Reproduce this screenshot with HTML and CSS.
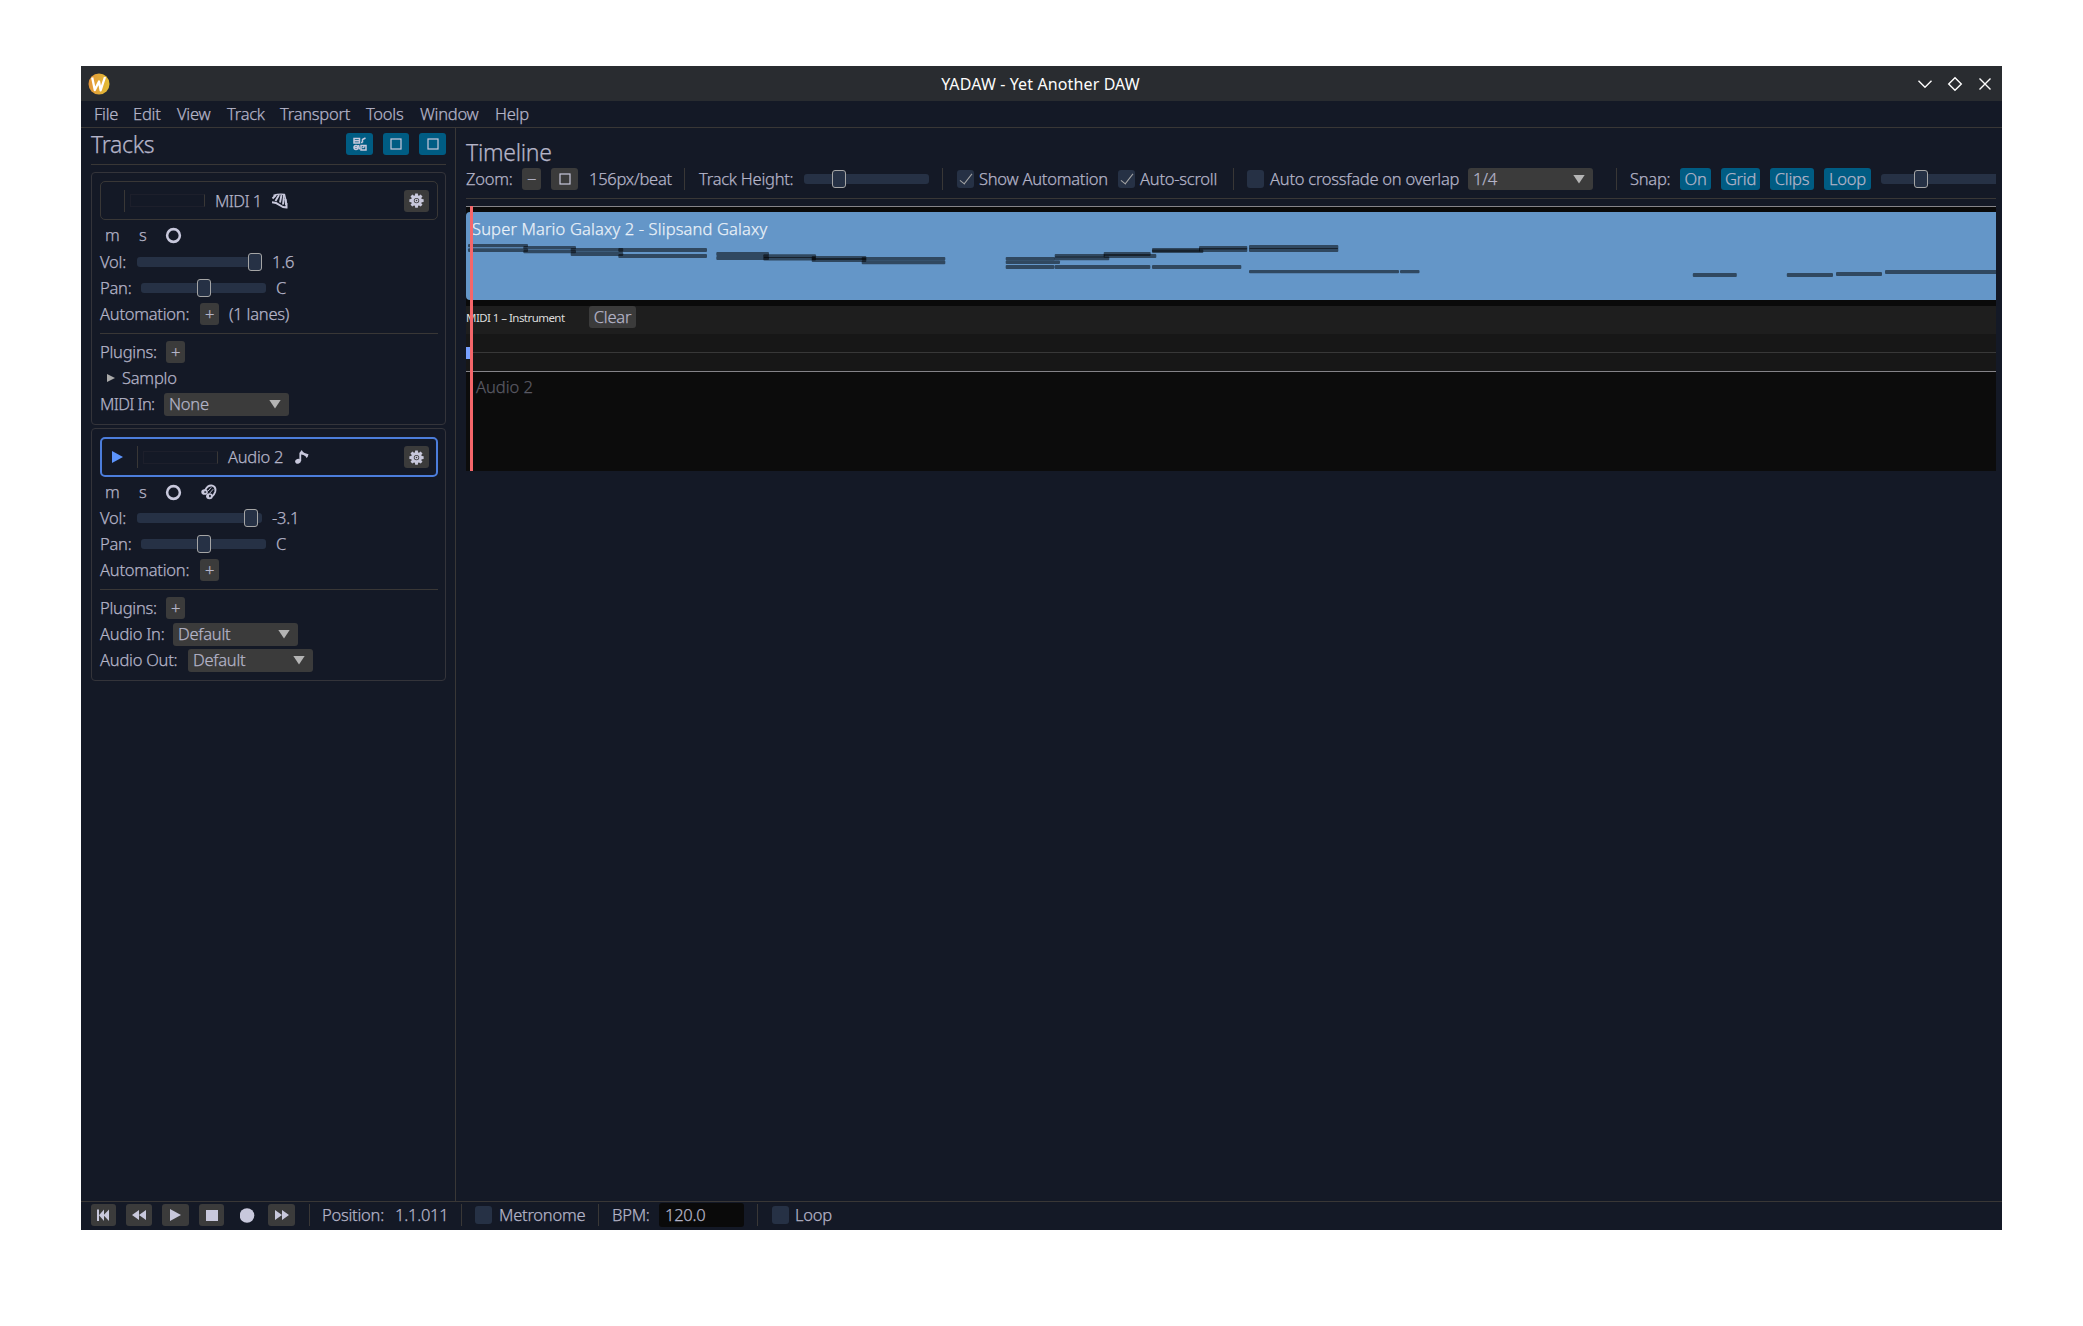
FILE: index.html
```html
<!DOCTYPE html>
<html lang="en">
<head>
<meta charset="utf-8">
<title>YADAW - Yet Another DAW</title>
<link rel="stylesheet" href="styles.css">
</head>
<body>
<svg class="defs" width="0" height="0">
  <symbol id="gear" viewBox="0 0 16 16">
    <path fill-rule="evenodd" d="M6.600 .5h2.800l.3 2.100 1 .4 1.700-1.300 2 2-1.300 1.700.4 1 2.100.3v2.800l-2.100.3-.4 1 1.300 1.700-2 2-1.700-1.300-1 .4-.3 2.100H6.600l-.3-2.100-1-.4-1.700 1.300-2-2 1.300-1.700-.4-1-2.100-.3V6.700l2.100-.3.4-1L1.600 3.700l2-2L5.300 3l1-.4zM8 5.200a2.900 2.900 0 1 0 0 5.800A2.900 2.900 0 0 0 8 5.200zm0 .8a2.100 2.100 0 1 1 0 4.200A2.100 2.100 0 0 1 8 6zm0 1.300a.8.8 0 1 0 0 1.600.8.800 0 0 0 0-1.600z"/>
  </symbol>
  <symbol id="ring" viewBox="0 0 16 16"><circle cx="8" cy="8" r="6" fill="none" stroke="currentColor" stroke-width="2.400"/></symbol>
  <symbol id="square" viewBox="0 0 12 12"><rect x="1" y="1" width="10" height="10" fill="none" stroke="currentColor" stroke-width="1.200"/></symbol>
</svg>
<div class="window">
  <header class="titlebar">
    <svg class="logo" viewBox="0 0 22 22"><defs><linearGradient id="gold" x1="0" x2="1"><stop offset="0" stop-color="#e3963a"/><stop offset="1" stop-color="#e2bd34"/></linearGradient></defs><circle cx="11" cy="11" r="10.500" fill="url(#gold)"/><path d="M4.200 4.500 6.800 17 11 8.500 12.600 17.300 17 4" fill="none" stroke="#fff" stroke-width="2.300" stroke-linejoin="round"/></svg>
    <h1 class="app-title">YADAW - Yet Another DAW</h1>
    <svg class="controls" viewBox="0 0 76 16"><path d="M1.500 4.800 8 11.300 14.500 4.800M31.700 8 38 1.700 44.300 8 38 14.300zM62.500 2.500l11 11M73.500 2.500l-11 11" fill="none" stroke="#fcfcfc" stroke-width="1.400"/></svg>
  </header>
  <nav class="menubar">
    <span>File</span><span>Edit</span><span>View</span><span>Track</span><span>Transport</span><span>Tools</span><span>Window</span><span>Help</span>
  </nav>
  <div class="workspace">
    <aside class="tracks">
      <div class="tracks-head">
        <h2 class="heading">Tracks</h2>
        <span class="toggle b27"><svg width="14" height="14" viewBox="0 0 14 14" fill="none" stroke="currentColor" stroke-width="1.500"><path d="M1 1.500h5.500v4.500H1zM1 3.700h5.500M9.500 5.500V2.500l3-1.500M8 5.500h1.500M5.500 8 6.500 12.500M8 8.500h5v4.500H8zM9.500 11l2-1.500"/><circle cx="3" cy="10.500" r="2"/><path d="M1 10.500h4"/></svg></span>
        <span class="toggle b26"><svg width="12" height="12"><use href="#square"/></svg></span>
        <span class="toggle b27"><svg width="12" height="12"><use href="#square"/></svg></span>
      </div>
      <section class="card midi">
        <div class="card-head">
          <span class="arrow"></span><i class="vsep"></i><i class="meter"></i>
          <span class="name">MIDI 1</span>
          <svg class="kind" width="17" height="16" viewBox="0 0 17 16" fill="none" stroke="currentColor"><path d="M1 9.300Q5.500 9.500 8.500 12 11.500 14.500 15.500 14.500V10" stroke-width="2"/><path d="M2.500 2.500Q8 .5 13.500 1.500L15.500 10" stroke-width="1.400"/><path d="M5 2 1.500 5.500M8 2 4.500 8M10.500 2 9 9.500M13 2 12 11.500M14.500 6l.5 6" stroke-width="1.900"/></svg>
          <span class="btn b25 gear"><svg width="15" height="15" fill="currentColor"><use href="#gear"/></svg></span>
        </div>
        <div class="row toggles"><span>m</span><span>s</span><svg width="17" height="17"><use href="#ring"/></svg></div>
        <div class="row vol"><span>Vol:</span><span class="slider"><i class="knob p111"></i></span><span>1.6</span></div>
        <div class="row pan"><span>Pan:</span><span class="slider"><i class="knob p56"></i></span><span>C</span></div>
        <div class="row automation"><span>Automation:</span><span class="btn b19">+</span><span>(1 lanes)</span></div>
        <hr>
        <div class="row plugins"><span>Plugins:</span><span class="btn b19">+</span></div>
        <div class="row plugin"><i class="tri"></i><span>Samplo</span></div>
        <div class="row midi-in"><span>MIDI In:</span><span class="combo">None</span></div>
      </section>
      <section class="card audio">
        <div class="card-head selected">
          <span class="arrow"><svg width="11" height="12"><path d="M0 0 11 6 0 12z" fill="#5c93fb"/></svg></span><i class="vsep"></i><i class="meter"></i>
          <span class="name">Audio 2</span>
          <svg class="kind" width="14" height="14" viewBox="0 0 14 14" fill="currentColor"><ellipse cx="3" cy="11.200" rx="2.900" ry="2.400" transform="rotate(-20 3 11.200)"/><path d="M4.400 11V3L6.800 0Q8 3.200 13.500 4.200 13 7.500 11.300 8 11.300 5.500 6.200 4.500V11z"/></svg>
          <span class="btn b25 gear"><svg width="15" height="15" fill="currentColor"><use href="#gear"/></svg></span>
        </div>
        <div class="row toggles"><span>m</span><span>s</span><svg width="17" height="17"><use href="#ring"/></svg><svg width="16" height="16" viewBox="0 0 17 16" fill="currentColor"><g fill="none" stroke="currentColor"><path d="M4.500 6Q7 .5 12 1.200 16.500 2.500 15 8 14 11 12 12.500" stroke-width="2"/><path d="M7.500 7 11 3M9 9.500 13 5" stroke-width="1"/></g><ellipse cx="3.800" cy="8" rx="3.500" ry="3"/><ellipse cx="9" cy="12.500" rx="3.600" ry="3.200"/><ellipse cx="4.500" cy="8" rx="1.200" ry=".9" fill="#141926"/><ellipse cx="9.500" cy="12.300" rx="1" ry="1.500" fill="#141926"/></svg></div>
        <div class="row vol"><span>Vol:</span><span class="slider"><i class="knob p107"></i></span><span>-3.1</span></div>
        <div class="row pan"><span>Pan:</span><span class="slider"><i class="knob p56"></i></span><span>C</span></div>
        <div class="row automation"><span>Automation:</span><span class="btn b19">+</span></div>
        <hr>
        <div class="row plugins"><span>Plugins:</span><span class="btn b19">+</span></div>
        <div class="row audio-in"><span>Audio In:</span><span class="combo">Default</span></div>
        <div class="row audio-out"><span>Audio Out:</span><span class="combo">Default</span></div>
      </section>
    </aside>
    <main class="timeline">
      <h2 class="heading">Timeline</h2>
      <div class="toolbar">
        <span>Zoom:</span><span class="btn b19">−</span><span class="btn b27"><svg width="12" height="12"><use href="#square"/></svg></span><span>156px/beat</span><i class="vsep"></i>
        <span>Track Height:</span><span class="slider"><i class="knob p28"></i></span><i class="vsep"></i>
        <span class="check on"></span><span>Show Automation</span><span class="check on"></span><span>Auto-scroll</span><i class="vsep"></i>
        <span class="check"></span><span>Auto crossfade on overlap</span><span class="combo">1/4</span><i class="vsep"></i>
        <span>Snap:</span><span class="toggle b31">On</span><span class="toggle b39">Grid</span><span class="toggle b44">Clips</span><span class="toggle b47">Loop</span><span class="slider cut"><i class="knob p33"></i></span>
      </div>
      <div class="canvas">
        <div class="lane">
          <div class="clip">
            <span class="clip-name">Super Mario Galaxy 2 - Slipsand Galaxy</span>
            <svg class="notes" viewBox="466 212 1530 88" fill="#000" fill-opacity=".52">
              <rect x="468" y="244" width="60" height="3.300" rx="1"/><rect x="468" y="248.300" width="60" height="3.700" rx="1"/>
              <rect x="523.300" y="246" width="52.700" height="3.400" rx="1"/><rect x="523.300" y="250" width="52.700" height="3.300" rx="1"/>
              <rect x="570.700" y="248" width="52.500" height="3.700" rx="1"/><rect x="570.700" y="252" width="52.500" height="4" rx="1"/>
              <rect x="618.300" y="248" width="88.700" height="4" rx="1"/><rect x="618.300" y="254" width="88.700" height="4" rx="1"/>
              <rect x="716.300" y="252" width="52.700" height="4" rx="1"/><rect x="716.300" y="256" width="52.700" height="4" rx="1"/>
              <rect x="763.300" y="254.300" width="52.700" height="3.700" rx="1"/><rect x="763.300" y="257" width="52.700" height="3.500" rx="1"/>
              <rect x="811.700" y="256" width="54.600" height="4" rx="1"/><rect x="811.700" y="258" width="54.600" height="4" rx="1"/>
              <rect x="861.700" y="257" width="83.600" height="3.500" rx="1"/><rect x="861.700" y="260.500" width="83.600" height="3.700" rx="1"/>
              <rect x="1005.700" y="257" width="49.300" height="3.500" rx="1"/><rect x="1005.700" y="260.400" width="54.300" height="3.700" rx="1"/>
              <rect x="1054.700" y="254" width="50" height="3.500" rx="1"/><rect x="1054.700" y="256.500" width="54.600" height="3.700" rx="1"/>
              <rect x="1103.700" y="252" width="47" height="4" rx="1"/><rect x="1103.700" y="254" width="52.600" height="4" rx="1"/>
              <rect x="1152" y="248" width="48" height="4" rx="1"/><rect x="1152" y="249.500" width="51.300" height="3.500" rx="1"/>
              <rect x="1199" y="246" width="48.300" height="3.500" rx="1"/><rect x="1199" y="248" width="48.300" height="4" rx="1"/>
              <rect x="1249" y="245" width="89.300" height="4" rx="1"/><rect x="1249" y="248" width="89.300" height="4" rx="1"/>
              <rect x="1005.700" y="265" width="48.700" height="4" rx="1"/><rect x="1054.700" y="265" width="95.600" height="4" rx="1"/><rect x="1152" y="265" width="89.300" height="4" rx="1"/>
              <rect x="1249" y="270" width="150" height="3.300" rx="1"/><rect x="1400" y="270" width="19.500" height="3.300" rx="1"/>
              <rect x="1692.800" y="273" width="44" height="4" rx="1"/><rect x="1786.800" y="273" width="46.200" height="4" rx="1"/><rect x="1836" y="272" width="46" height="4" rx="1"/><rect x="1885" y="270" width="114" height="4" rx="1"/>
            </svg>
          </div>
        </div>
        <div class="auto-head"><span class="auto-name">MIDI 1 – Instrument</span><span class="btn b47">Clear</span></div>
        <div class="auto-lane"><i class="point"></i><i class="auto-line"></i></div>
        <div class="audio-lane"><span>Audio 2</span></div>
        <i class="playhead"></i>
      </div>
    </main>
  </div>
  <footer class="transport">
    <span class="btn b25"><svg width="13" height="12" fill="currentColor"><path d="M0 .5h2V12H0zM7 .5V12L2 6.200zM12 .5V12L6.500 6.200z"/></svg></span>
    <span class="btn b26"><svg width="14" height="10" fill="currentColor"><path d="M7 0v10L0 5zM14 0v10L7 5z"/></svg></span>
    <span class="btn b27"><svg width="11" height="12" fill="currentColor"><path d="M0 0 11 6 0 12z"/></svg></span>
    <span class="btn b25"><svg width="12" height="11" fill="currentColor"><path d="M0 0h12v11H0z"/></svg></span>
    <svg width="15" height="15" fill="currentColor"><circle cx="7" cy="7.500" r="7.300"/></svg>
    <span class="btn b27"><svg width="14" height="10" fill="currentColor"><path d="M0 0 7 5 0 10zM7 0l7 5-7 5z"/></svg></span>
    <i class="vsep"></i><span>Position:</span><span>1.1.011</span><i class="vsep"></i>
    <span class="check"></span><span>Metronome</span><i class="vsep"></i><span>BPM:</span><span class="field">120.0</span><i class="vsep"></i><span class="check"></span><span>Loop</span>
  </footer>
</div>
</body>
</html>
```
FILE: styles.css
```css
* { box-sizing: border-box; }
body {
  margin: 0;
  padding: 66px 81px;
  background: #fff;
  color: #b4b4c8;
  font: 300 16.500px/22px "Noto Sans", sans-serif;
  letter-spacing: -0.24px;
  -webkit-text-stroke: 0.25px currentColor;
  white-space: nowrap;
}
.defs { position: absolute; }
svg { display: block; flex: none; color: #c8c8dc; }
i { display: block; flex: none; }
.window {
  width: 1921px;
  height: 1164px;
  background: #141926;
  display: grid;
  grid-template-rows: 35px 27px 1073px 29px;
}
.titlebar {
  background: #292c30;
  display: grid;
  grid-template-columns: 100px 1fr 100px;
  align-items: center;
  padding: 0 9px 0 7px;
}
.logo { width: 22px; height: 22px; }
.app-title { margin: 0; font-size: 16px; font-weight: 400; color: #fcfcfc; text-align: center; letter-spacing: 0.12px; -webkit-text-stroke: 0; }
.controls { width: 76px; height: 16px; justify-self: end; }
.menubar {
  display: grid;
  grid-template-columns: 39px 44px 50px 53px 86px 54px 75px 40px;
  align-items: center;
  padding-left: 13px;
  border-bottom: 1px solid #393736;
}
.workspace { display: grid; grid-template-columns: 375px 1fr; }
.tracks { border-right: 1px solid #393736; padding: 0 9px 0 10px; }
.heading { margin: 0; font-size: 23px; font-weight: 300; line-height: 30px; letter-spacing: -0.3px; }
.tracks-head {
  height: 37px;
  display: flex;
  align-items: center;
  gap: 10px;
  padding-bottom: 4px;
  border-bottom: 1px solid #393736;
}
.tracks-head .heading { flex: 1; }

.btn, .toggle {
  height: 22px;
  border-radius: 3px;
  background: #3b3b3b;
  display: flex;
  align-items: center;
  justify-content: center;
}
.toggle { background: #005c83; }
.b19 { width: 19px; }
.b25 { width: 25px; }
.b26 { width: 26px; }
.b27 { width: 27px; }
.b31 { width: 31px; }
.b39 { width: 39px; }
.b44 { width: 44px; }
.b47 { width: 47px; }
.vsep { width: 1px; height: 22px; background: #393736; }

.card { height: 253px; border: 1px solid #34343a; border-radius: 4px; padding: 8px; margin-top: 7px; }
.card + .card { margin-top: 3px; }
.card-head {
  height: 39px;
  width: 338px;
  border: 1px solid #393736;
  border-radius: 5px;
  display: flex;
  align-items: center;
  padding: 0 8px 0 10px;
  margin-bottom: 2px;
}
.card-head.selected { height: 40px; border: 2px solid #4c7ddb; padding: 0 7px 0 10px; }
.arrow { width: 13px; }
.selected .arrow { width: 25px; }
.meter { width: 75px; height: 13px; border: 1px solid #1d1f2b; border-right-color: #393736; margin-left: 5px; }
.name { margin-left: 10px; width: 56px; letter-spacing: -0.6px; }
.selected .name { width: 67px; letter-spacing: -0.27px; }
.gear { margin-left: auto; }
.row { height: 26px; display: grid; align-items: center; }
.toggles { grid-template-columns: 34px 26px 36px 20px; padding-left: 5px; }
.midi .vol { margin-top: 1px; }
.vol { grid-template-columns: 37px 135px 40px; }
.pan { grid-template-columns: 41px 135px 40px; }
.automation { grid-template-columns: 100px 29px 70px; }
.plugins { grid-template-columns: 66px 30px; }
.plugin { grid-template-columns: 15px 60px; padding-left: 7px; }
.midi-in { grid-template-columns: 64px 125px; }
.midi-in span:first-child { letter-spacing: -0.65px; }
.audio-in { grid-template-columns: 73px 125px; }
.audio-out { grid-template-columns: 88px 125px; }
hr { width: 338px; height: 1px; border: 0; background: #393736; margin: 6px 0 5px; }
.tri { width: 8px; height: 8px; background: #aaa; clip-path: polygon(0 0, 100% 50%, 0 100%); }
.slider { position: relative; width: 125px; height: 10px; border-radius: 3px; background: #263145; }
.slider.cut { width: 115px; border-radius: 3px 0 0 3px; }
.knob {
  position: absolute;
  top: -4px;
  width: 14px;
  height: 18px;
  border: 1.300px solid #a5a5a5;
  border-radius: 3px;
  background: #263145;
}
.p28 { left: 28px; }
.p33 { left: 33px; }
.p56 { left: 56px; }
.p107 { left: 107px; }
.p111 { left: 111px; }
.combo {
  width: 125px;
  height: 23px;
  border-radius: 3px;
  background: #3b3b3b;
  display: flex;
  align-items: center;
  justify-content: space-between;
  padding: 0 8px 0 5px;
}
.combo::after { content: ""; width: 12px; height: 9px; background: #b4b4b4; clip-path: polygon(0 0, 100% 0, 50% 100%); }

.timeline { padding: 9px 6px 0 10px; overflow: hidden; }
.timeline .heading { height: 31px; }
.toolbar {
  height: 22px;
  display: grid;
  align-items: center;
  grid-template-columns: 56px 29px 38px 95px 15px 105px 138px 15px 22px 139px 22px 93px 14px 23px 198px 148px 14px 50px 41px 49px 54px 57px 115px;
}
.check { position: relative; width: 17px; height: 18px; border-radius: 3px; background: #263145; }
.check.on::after {
  content: "";
  position: absolute;
  left: 6px;
  top: 1px;
  width: 5px;
  height: 12px;
  border: solid #a5a5a5;
  border-width: 0 1.300px 1.300px 0;
  transform: rotate(38deg);
}
.canvas { position: relative; margin-top: 8px; border-top: 1px solid #393736; height: 273px; padding-top: 7px; }
.toolbar .combo { height: 22px; }
.lane { height: 100px; background: #0a0a0a; border-top: 1px solid #858489; padding: 5px 0 6px; }
.clip { position: relative; height: 88px; background: #6496c8; border-radius: 4px 0 0 4px; padding: 6px 6px; }
.clip-name { color: #eaf1f8; letter-spacing: 0.14px; }
.notes { position: absolute; left: 0; top: 0; width: 1530px; height: 88px; }
.auto-head { height: 28px; background: #1e1e1e; display: grid; grid-template-columns: 123px 60px; align-items: start; }
.auto-name { font-size: 11.500px; font-weight: 400; color: #dcdcdc; line-height: 24px; letter-spacing: -0.55px; -webkit-text-stroke: 0; }
.auto-lane { height: 37px; background: #171717; display: flex; align-items: center; }
.point { width: 5px; height: 12px; background: #78a0ff; }
.auto-line { flex: 1; height: 1px; background: #383838; margin-left: 2px; }
.audio-lane { height: 100px; background: #0c0c0c; border-top: 1px solid #858489; padding: 4px 10px; color: #5a5a64; letter-spacing: 0; }
.playhead { position: absolute; left: 4px; top: 7px; width: 2.500px; height: 265px; background: #f5666a; }

.transport {
  border-top: 1px solid #393736;
  display: grid;
  align-items: center;
  padding: 0 0 2px 10px;
  grid-template-columns: 35px 36px 37px 41px 28px 41px 13px 73px 66px 14px 24px 99px 14px 47px 98px 15px 23px 40px;
}
.field { width: 85px; height: 24px; border-radius: 3px; background: #0a0a0a; padding-left: 6px; line-height: 24px; }
```
